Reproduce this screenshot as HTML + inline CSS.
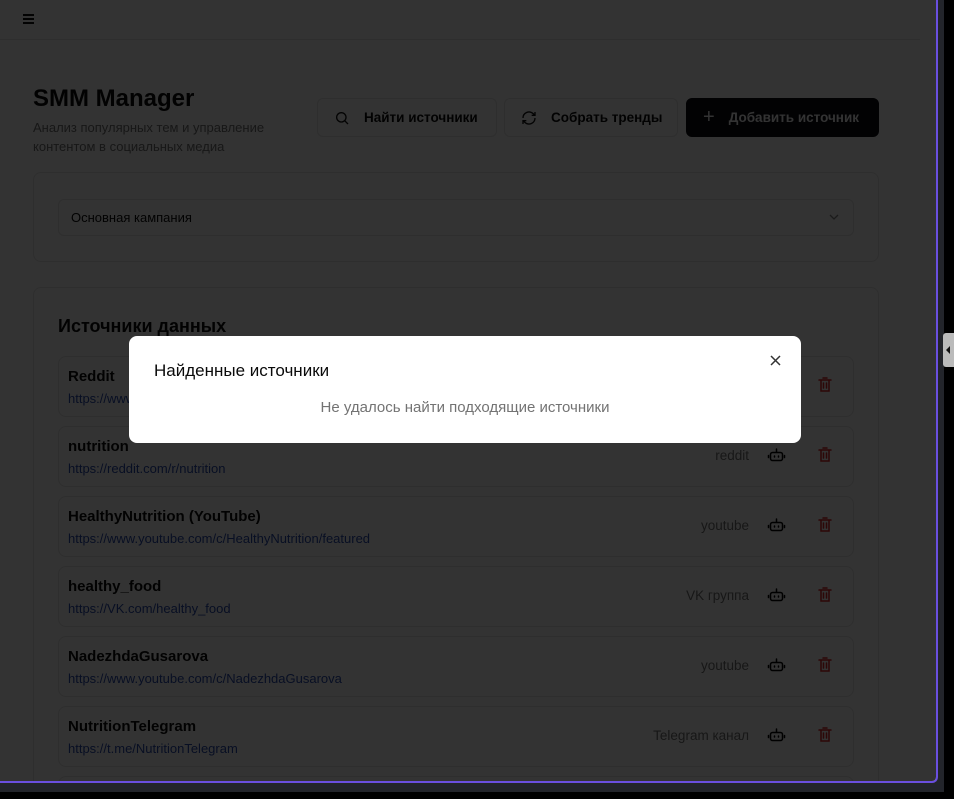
<!DOCTYPE html>
<html><head><meta charset="utf-8"><style>
*{box-sizing:border-box;margin:0;padding:0}
body{width:954px;height:799px;background:#000;font-family:"Liberation Sans","Noto Sans CJK SC",sans-serif;overflow:hidden;position:relative}
.frame{position:absolute;left:0;top:0;width:944px;height:792px;background:#23252b}
.app{position:absolute;left:0;top:0;width:938px;height:783px;border-right:2px solid #6a4fe0;border-bottom:2px solid #6a4fe0;border-bottom-right-radius:6px;background:#fff;overflow:hidden}
.top{position:absolute;left:0;top:0;width:920px;height:40px;border-bottom:1px solid #e5e5e5}
.ham{position:absolute;left:23px;top:14px;width:11px}
.ham i{display:block;height:2px;background:#111;margin-bottom:2px}
h1{position:absolute;left:33px;top:85px;font-size:24px;font-weight:bold;color:#0a0a0a}
.sub{position:absolute;left:33px;top:118px;font-size:13px;line-height:19px;color:#737373;width:260px}
.btn{position:absolute;top:98px;height:39px;border:1px solid #e5e5e5;border-radius:6px;font-size:13.5px;font-weight:bold;color:#0a0a0a;display:flex;align-items:center;padding-left:16px;gap:14px}
.btn.dark{background:#0a0a12;color:#fff;border-color:#0a0a12}
.card{position:absolute;left:33px;width:846px;border:1px solid #e5e5e5;border-radius:8px}
.sel{position:absolute;left:24px;top:26px;width:796px;height:37px;border:1px solid #e5e5e5;border-radius:6px;font-size:13px;padding:10px 12px;color:#0a0a0a}
.row{position:absolute;left:24px;width:796px;height:61px;border:1px solid #e5e5e5;border-radius:8px}
.nm{position:absolute;left:9px;top:11px;font-size:15px;font-weight:bold;color:#0a0a0a}
.url{position:absolute;left:9px;top:34px;font-size:13px;color:#2a4bb0}
.ty{position:absolute;right:104px;top:21px;font-size:13.5px;color:#737373}
.ov{position:absolute;inset:0;background:rgba(0,0,0,.8)}
.modal{position:absolute;left:129px;top:336px;width:672px;height:107px;background:#fff;border-radius:8px}
.modal h2{position:absolute;left:25px;top:25px;font-size:17px;font-weight:normal;color:#0a0a0a}
.modal p{position:absolute;left:0;width:100%;top:63px;text-align:center;font-size:15px;color:#737373}
.x{position:absolute;left:641px;top:19px}
.tab{position:absolute;left:943px;top:333px;width:11px;height:34px;background:#bbb;border-radius:3px 0 0 3px}
.tab:after{content:"";position:absolute;left:3px;top:13px;border:4px solid transparent;border-right:4px solid #111;border-left:0}
</style></head><body>
<div class="frame"></div>
<div class="app">
<div class="top"><div class="ham"><i></i><i></i><i></i></div></div>
<h1>SMM Manager</h1>
<div class="sub">Анализ популярных тем и управление контентом в социальных медиа</div>
<div class="btn" style="left:317px;width:180px"><svg width="16" height="16" viewBox="0 0 24 24" fill="none" stroke="#111" stroke-width="2"><circle cx="11" cy="11" r="7"/><path d="M21 21l-5-5"/></svg>Найти источники</div>
<div class="btn" style="left:504px;width:174px"><svg width="16" height="16" viewBox="0 0 24 24" fill="none" stroke="#111" stroke-width="2"><path d="M21 12a9 9 0 0 1-15 6.7L3 16M3 12a9 9 0 0 1 15-6.7L21 8M21 3v5h-5M3 21v-5h5"/></svg>Собрать тренды</div>
<div class="btn dark" style="left:686px;width:193px"><span style="font-size:20px;font-weight:normal">+</span>Добавить источник</div>
<div class="card" style="top:172px;height:90px"><div class="sel">Основная кампания<svg style="position:absolute;right:14px;top:14px" width="10" height="7" viewBox="0 0 10 7" fill="none" stroke="#888" stroke-width="1.3"><path d="M1 1l4 4 4-4"/></svg></div></div>
<div class="card" style="top:287px;height:520px">
<div style="position:absolute;left:24px;top:28px;font-size:18px;font-weight:bold;color:#0a0a0a">Источники данных</div>
<div class="row" style="top:68px"><div class="nm">Reddit</div><div class="url">https://www.reddit.com/</div><div class="ty">reddit</div></div>
<div class="row" style="top:138px"><div class="nm">nutrition</div><div class="url">https://reddit.com/r/nutrition</div><div class="ty">reddit</div></div>
<div class="row" style="top:208px"><div class="nm">HealthyNutrition (YouTube)</div><div class="url">https://www.youtube.com/c/HealthyNutrition/featured</div><div class="ty">youtube</div></div>
<div class="row" style="top:278px"><div class="nm">healthy_food</div><div class="url">https://VK.com/healthy_food</div><div class="ty">VK группа</div></div>
<div class="row" style="top:348px"><div class="nm">NadezhdaGusarova</div><div class="url">https://www.youtube.com/c/NadezhdaGusarova</div><div class="ty">youtube</div></div>
<div class="row" style="top:418px"><div class="nm">NutritionTelegram</div><div class="url">https://t.me/NutritionTelegram</div><div class="ty">Telegram канал</div></div>
<div class="row" style="top:488px"></div>
</div>
<svg style="position:absolute;left:0;top:0" width="938" height="783">
<g fill="none" stroke-width="1.5" stroke-linecap="round">
<g stroke="#000">
<rect x="770.5" y="452.5" width="12" height="8" rx="2"/><path d="M776.5 452v-3M768.5 455.5v2M784.5 455.5v2M774.5 456v1M778.5 456v1"/>
<rect x="770.5" y="522.5" width="12" height="8" rx="2"/><path d="M776.5 522v-3M768.5 525.5v2M784.5 525.5v2M774.5 526v1M778.5 526v1"/>
<rect x="770.5" y="592.5" width="12" height="8" rx="2"/><path d="M776.5 592v-3M768.5 595.5v2M784.5 595.5v2M774.5 596v1M778.5 596v1"/>
<rect x="770.5" y="662.5" width="12" height="8" rx="2"/><path d="M776.5 662v-3M768.5 665.5v2M784.5 665.5v2M774.5 666v1M778.5 666v1"/>
<rect x="770.5" y="732.5" width="12" height="8" rx="2"/><path d="M776.5 732v-3M768.5 735.5v2M784.5 735.5v2M774.5 736v1M778.5 736v1"/></g>
<g stroke="#e02424"><path d="M819 380h12M821 380v11h8v-11M823 378h4M823.5 383v5M826.5 383v5"/>
<path d="M819 450h12M821 450v11h8v-11M823 448h4M823.5 453v5M826.5 453v5"/>
<path d="M819 520h12M821 520v11h8v-11M823 518h4M823.5 523v5M826.5 523v5"/>
<path d="M819 590h12M821 590v11h8v-11M823 588h4M823.5 593v5M826.5 593v5"/>
<path d="M819 660h12M821 660v11h8v-11M823 658h4M823.5 663v5M826.5 663v5"/>
<path d="M819 730h12M821 730v11h8v-11M823 728h4M823.5 733v5M826.5 733v5"/></g>
</g></svg>
<div class="ov"></div>
</div>
<div class="modal"><h2>Найденные источники</h2><p>Не удалось найти подходящие источники</p>
<svg class="x" width="11" height="11" viewBox="0 0 11 11" stroke="#333" stroke-width="1.5"><path d="M1 1l9 9M10 1l-9 9"/></svg></div>
<div class="tab"></div>
</body></html>
